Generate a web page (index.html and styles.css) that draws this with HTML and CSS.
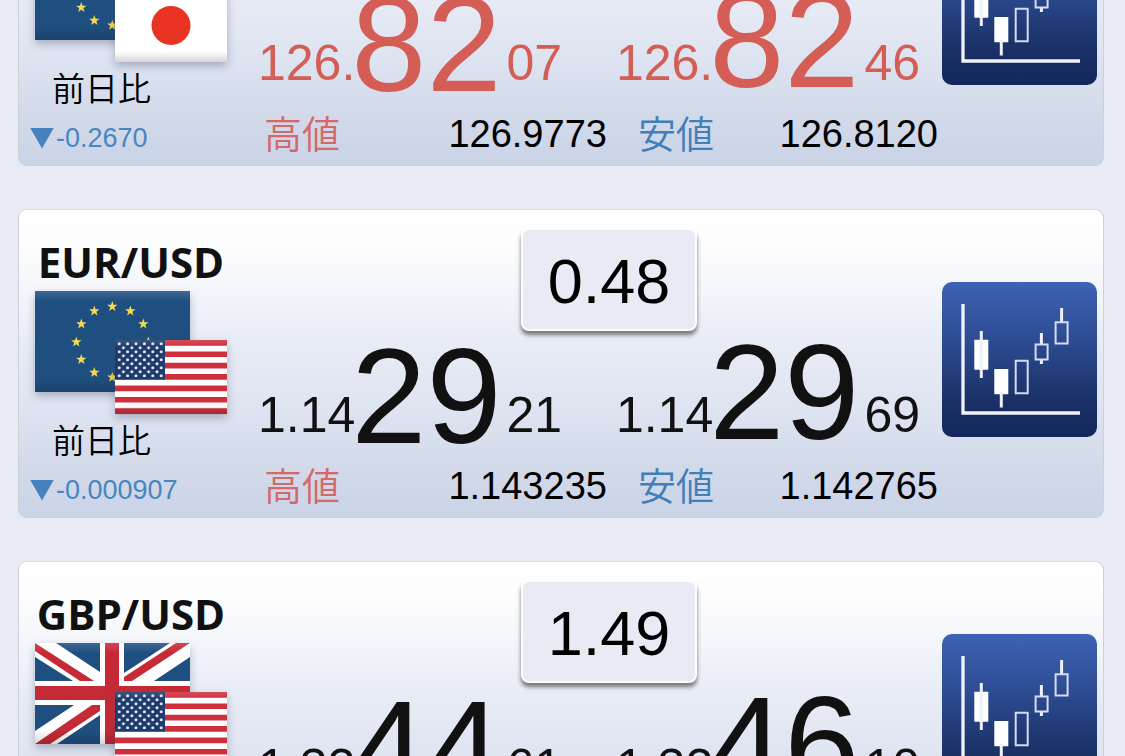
FILE: index.html
```html
<!DOCTYPE html>
<html lang="ja">
<head>
<meta charset="utf-8">
<meta name="viewport" content="width=device-width, initial-scale=1">
<title>レート一覧</title>
<link rel="stylesheet" href="styles.css">
</head>
<body>
<svg class="defs" aria-hidden="true">
  <defs>
    <linearGradient id="shade" x1="0" y1="0" x2="0" y2="1">
      <stop offset="0" stop-color="#fff" stop-opacity=".14"/>
      <stop offset=".1" stop-color="#fff" stop-opacity="0"/>
      <stop offset=".86" stop-color="#000" stop-opacity="0"/>
      <stop offset="1" stop-color="#000" stop-opacity=".16"/>
    </linearGradient>
    <pattern id="us-stars" width="8.4" height="8" patternUnits="userSpaceOnUse">
      <circle cx="4.2" cy="3.8" r="1.5" fill="#e6ecf6"/>
      <circle cx="0" cy="7.8" r="1.5" fill="#e6ecf6"/>
      <circle cx="8.4" cy="7.8" r="1.5" fill="#e6ecf6"/>
      <circle cx="0" cy="-.2" r="1.5" fill="#e6ecf6"/>
      <circle cx="8.4" cy="-.2" r="1.5" fill="#e6ecf6"/>
    </pattern>
    <path id="star" fill="#f2da4c" d="M0-5.4 1.3-1.7 5.2-1.7 2.1.7 3.2 4.4 0 2.2-3.2 4.4-2.1.7-5.2-1.7-1.3-1.7Z"/>
    <symbol id="flag-eu" viewBox="0 0 155 101">
      <path fill="#1f4f80" d="M0 0h155v101H0z"/>
      <use href="#star" x="77.3" y="15.5"/><use href="#star" x="95.3" y="20"/>
      <use href="#star" x="108.3" y="33"/><use href="#star" x="113.3" y="51"/>
      <use href="#star" x="108.3" y="68.5"/><use href="#star" x="95.3" y="81.5"/>
      <use href="#star" x="77.3" y="86.3"/><use href="#star" x="59.3" y="81.5"/>
      <use href="#star" x="46.3" y="68.5"/><use href="#star" x="41.3" y="51"/>
      <use href="#star" x="46.3" y="33"/><use href="#star" x="59.3" y="20"/>
      <path fill="url(#shade)" d="M0 0h155v101H0z"/>
    </symbol>
    <symbol id="flag-gb" viewBox="0 0 155 101">
      <path fill="#fff" d="M0 0h155v101H0z"/>
      <path fill="#1f4f80" d="M21 0H65V29ZM0 14V38H38ZM89 0H135L89 30ZM155 14V38H119ZM0 62H39L0 88ZM65 101H22L65 72ZM155 87V62H117ZM89 101H134L89 72Z"/>
      <path fill="#c62a36" d="M0 0V8L45 38H59ZM141 0H155L97 38H89V34ZM0 101 57 62H65V68L15 101ZM155 101V93L110 62H97ZM70 0H84V43H155V57H84V101H70V57H0V43H70Z"/>
      <path fill="url(#shade)" d="M0 0h155v101H0z"/>
    </symbol>
    <symbol id="flag-us" viewBox="0 0 112 74">
      <path fill="#fff" d="M0 0h112v74H0z"/>
      <path fill="#cf2e3c" d="M0 0h112v5.7H0zM0 11.4h112v5.7H0zM0 22.8h112v5.7H0zM0 34.1h112v5.7H0zM0 45.5h112v5.7H0zM0 56.9h112v5.7H0zM0 68.3h112V74H0z"/>
      <path fill="#1c3a6c" d="M0 0h50v39.4H0z"/>
      <path fill="url(#us-stars)" d="M2 2h46.500v35.500H2z"/>
      <path fill="url(#shade)" d="M0 0h112v74H0z"/>
    </symbol>
    <symbol id="flag-jp" viewBox="0 0 112 74">
      <path fill="#fff" d="M0 0h112v74H0z"/>
      <circle cx="56" cy="37.500" r="19.500" fill="#e93323"/>
      <path fill="url(#shade)" d="M0 0h112v74H0z"/>
    </symbol>
    <symbol id="candles" viewBox="0 0 155 155">
      <path fill="none" stroke="#f1f2fb" stroke-width="3.300" d="M21 22V131H138"/>
      <path fill="#fff" d="M32.300 57.700h14v30h-14zM52.300 87h14v25.300h-14z"/>
      <path fill="none" stroke="#eef1fb" stroke-width="3" d="M39.300 49V96M59.300 110V125.500M99.400 51V62M99.400 77.500V82M119.600 26V40"/>
      <path fill="none" stroke="#d5dcf3" stroke-width="2" d="M73.700 78.700h12v32.600h-12zM93.600 62.400h12v15.200h-12zM113.600 40.300h12v21.200h-12z"/>
    </symbol>
  </defs>
</svg>

<main class="rates">
  <article class="card">
    <section class="pair">
      <h2 class="pair-name">EUR/JPY</h2>
      <svg class="flags" viewBox="0 0 192 123" role="img" aria-label="EUR/JPY">
        <use class="flag" href="#flag-eu" width="155" height="101"/>
        <use class="flag" href="#flag-jp" x="80" y="49" width="112" height="74"/>
      </svg>
      <div class="change-label">前日比</div>
      <div class="change"><span class="down"></span>-0.2670</div>
    </section>
    <section class="quote">
      <div class="spread-row"><div class="spread">0.39</div></div>
      <div class="split prices up">
        <div class="price"><span>126.</span><span class="big">82</span><span class="pip">07</span></div>
        <div class="price ask"><span>126.</span><span class="big">82</span><span class="pip">46</span></div>
      </div>
      <dl class="split range">
        <div class="high"><dt>高値</dt><dd>126.9773</dd></div>
        <div class="low"><dt>安値</dt><dd>126.8120</dd></div>
      </dl>
    </section>
    <button class="chart" type="button" aria-label="チャート"><svg class="chart-icon" viewBox="0 0 155 155"><use href="#candles"/></svg></button>
  </article>

  <article class="card">
    <section class="pair">
      <h2 class="pair-name">EUR/USD</h2>
      <svg class="flags" viewBox="0 0 192 123" role="img" aria-label="EUR/USD">
        <use class="flag" href="#flag-eu" width="155" height="101"/>
        <use class="flag" href="#flag-us" x="80" y="49" width="112" height="74"/>
      </svg>
      <div class="change-label">前日比</div>
      <div class="change"><span class="down"></span>-0.000907</div>
    </section>
    <section class="quote">
      <div class="spread-row"><div class="spread">0.48</div></div>
      <div class="split prices">
        <div class="price"><span>1.14</span><span class="big">29</span><span class="pip">21</span></div>
        <div class="price ask"><span>1.14</span><span class="big">29</span><span class="pip">69</span></div>
      </div>
      <dl class="split range">
        <div class="high"><dt>高値</dt><dd>1.143235</dd></div>
        <div class="low"><dt>安値</dt><dd>1.142765</dd></div>
      </dl>
    </section>
    <button class="chart" type="button" aria-label="チャート"><svg class="chart-icon" viewBox="0 0 155 155"><use href="#candles"/></svg></button>
  </article>

  <article class="card">
    <section class="pair">
      <h2 class="pair-name">GBP/USD</h2>
      <svg class="flags" viewBox="0 0 192 123" role="img" aria-label="GBP/USD">
        <use class="flag" href="#flag-gb" width="155" height="101"/>
        <use class="flag" href="#flag-us" x="80" y="49" width="112" height="74"/>
      </svg>
    </section>
    <section class="quote">
      <div class="spread-row"><div class="spread">1.49</div></div>
      <div class="split prices">
        <div class="price"><span>1.32</span><span class="big">44</span><span class="pip">61</span></div>
        <div class="price ask"><span>1.32</span><span class="big">46</span><span class="pip">10</span></div>
      </div>
    </section>
    <button class="chart" type="button" aria-label="チャート"><svg class="chart-icon" viewBox="0 0 155 155"><use href="#candles"/></svg></button>
  </article>
</main>
</body>
</html>
```
FILE: styles.css
```css
* {
  box-sizing: border-box;
}

body {
  margin: 0;
  height: 100vh;
  overflow: hidden;
  background: #e8ebf4;
  color: #000;
  font-family: "Liberation Sans", "Noto Sans CJK JP", sans-serif;
}

.defs {
  position: absolute;
  width: 0;
  height: 0;
}

/* The list is scrolled part of the way through its first card. */
.rates {
  display: flex;
  flex-direction: column;
  gap: 43px;
  margin-top: -143px;
  padding: 0 21px 0 18px;
}

.card {
  display: grid;
  grid-template-columns: 197px minmax(0, 1fr) 155px;
  align-items: start;
  min-height: 309px;
  padding: 18px 6px 7px 11px;
  border: 1px solid #ccd0d9;
  border-top-color: #d9dade;
  border-radius: 9px;
  background: linear-gradient(#fff 0%, #fdfdfe 10%, #f3f5fa 28%, #e8ecf6 42%, #dde3f0 66%, #d3daea 82%, #cad4e7 100%);
}

.pair {
  padding-top: 10px;
}

.pair-name {
  margin: 0 0 5px 5px;
  font: bold 42px/48px "Open Sans", "Noto Sans", sans-serif;
  color: #111;
  text-align: center;
  white-space: nowrap;
}

.flags {
  display: block;
  width: 192px;
  height: 123px;
  margin-left: 5px;
  overflow: visible;
}

.flag {
  filter: drop-shadow(0 4px 4px rgba(60, 70, 100, 0.35));
}

.change-label {
  margin: 9px 0 19px;
  padding-left: 22px;
  font: 350 33px/32px "Noto Sans CJK JP", sans-serif;
}

.change {
  display: flex;
  align-items: center;
  gap: 2px;
  font-size: 27px;
  line-height: 32px;
  color: #4a86be;
}

.down {
  width: 24px;
  height: 21px;
  background: #4682bc;
  clip-path: polygon(0 0, 100% 0, 50% 100%);
}

.quote {
  margin: 0 4px 0 31px;
}

.spread-row {
  display: flex;
  justify-content: center;
  padding-left: 22px;
  margin-bottom: 14px;
}

.spread {
  width: 176px;
  padding-top: 3px;
  border: 2px solid #fdfdfe;
  border-radius: 8px;
  background: #e8ebf3;
  box-shadow: 0 4px 4px rgba(0, 0, 0, 0.5);
  font-size: 63px;
  line-height: 96px;
  text-align: center;
}

.split {
  display: grid;
  grid-template-columns: 52fr 48fr;
  column-gap: 9px;
}

.price {
  display: flex;
  align-items: flex-end;
  font-size: 50px;
  line-height: 50px;
  color: #111;
  white-space: nowrap;
}

.price > span {
  padding-bottom: 5px;
}

.price > .big {
  margin: 0 4px 0 -4px;
  padding-bottom: 0;
  font-size: 135px;
  line-height: 96px;
}

.ask > .big {
  padding-bottom: 4px;
}

/* The ask side sits slightly above the bid side. */
.price.ask > .big {
  padding-bottom: 4px;
}

.price > .pip {
  padding-left: 1px;
}

.up .price {
  color: #d45e56;
}

.range {
  margin: 17px 0 0;
  font-size: 38px;
  line-height: 48px;
}

.range > div {
  display: flex;
  justify-content: space-between;
}

.range dt {
  font-family: "Noto Sans CJK JP", sans-serif;
  font-weight: 350;
  line-height: 44px;
}

.range dd {
  margin: 0;
}

.high {
  padding-left: 6px;
}

.low {
  padding-left: 22px;
}

.high dt {
  color: #d5696a;
}

.low dt {
  color: #417fb8;
}

.chart {
  width: 155px;
  height: 155px;
  margin-top: 54px;
  padding: 0;
  border: 0;
  border-radius: 10px;
  background: linear-gradient(#3e63b4, #2c4b91 38%, #1b3268 75%, #12275a);
}

.chart-icon {
  display: block;
  width: 100%;
}
```
